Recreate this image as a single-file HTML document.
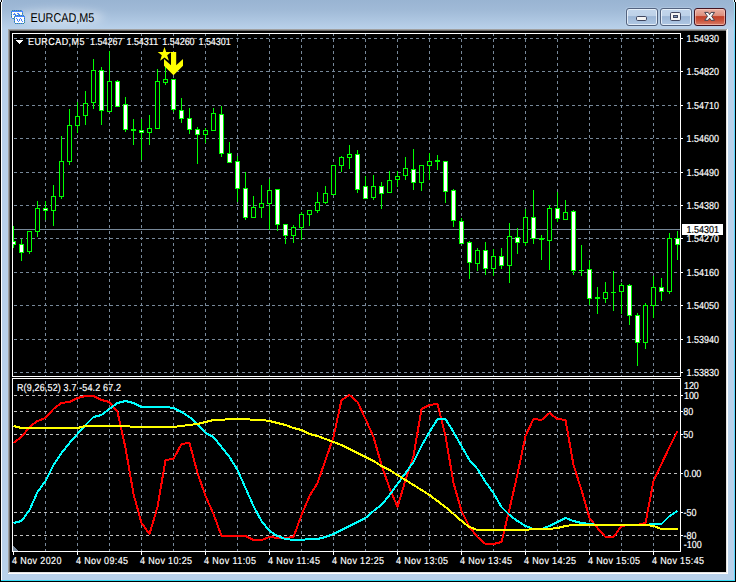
<!DOCTYPE html>
<html><head><meta charset="utf-8"><title>EURCAD,M5</title>
<style>
html,body{margin:0;padding:0;background:#fff;}
body{width:738px;height:582px;overflow:hidden;position:relative;font-family:"Liberation Sans",sans-serif;}
#win{position:absolute;left:0;top:0;width:736px;height:582px;background:#b9d1ea;}
#cap{position:absolute;left:2px;top:0;width:732px;height:29px;background:linear-gradient(to bottom,#99b4d2 0%,#a0bad7 35%,#b9d1ea 100%);}
.edge{position:absolute;}
.btn{position:absolute;top:8px;width:30px;height:16px;border:1px solid #53637f;border-radius:3px;
 background:linear-gradient(to bottom,#c3d6ec 0%,#bdd1e8 46%,#9cb6d6 47%,#b0c8e4 100%);box-shadow:inset 0 0 0 1px rgba(240,246,253,.8),0 0 0 1px rgba(200,218,238,.35);}
.btn.close{border-color:#431422;background:linear-gradient(to bottom,#eab2a5 0%,#dc8a78 46%,#c23f27 47%,#c9513a 70%,#d87d68 100%);box-shadow:inset 0 0 0 1px rgba(255,215,205,.55);}
svg{position:absolute;left:0;top:0;}
text{font-family:"Liberation Sans",sans-serif;font-size:9px;fill:#fff;text-rendering:geometricPrecision;}
</style></head><body>
<div id="win">
<div id="cap"></div>
<div class="edge" style="left:0;top:2px;width:1px;height:580px;background:#000"></div>
<div class="edge" style="left:1px;top:2px;width:1px;height:578px;background:#fff"></div>
<div class="edge" style="left:734px;top:2px;width:1px;height:579px;background:linear-gradient(to bottom,#a6e8fb 0,#8ee2fc 14px,#5cd8ff 40px,#5cd8ff 100%)"></div>
<div class="edge" style="left:735px;top:2px;width:1px;height:580px;background:#000"></div>
<div class="edge" style="left:1px;top:580px;width:734px;height:1px;background:#35dcf6"></div>
<div class="edge" style="left:0;top:581px;width:736px;height:1px;background:#000"></div>
<div class="edge" style="left:1px;top:0;width:1px;height:2px;background:#000"></div>
<div class="edge" style="left:0;top:0;width:1px;height:2px;background:#dce8f4"></div>
<div class="edge" style="left:2px;top:0;width:1px;height:2px;background:#e8f0f8"></div>
<div class="edge" style="left:734px;top:0;width:1px;height:2px;background:#000"></div>
<div class="edge" style="left:735px;top:0;width:1px;height:2px;background:#fff"></div>
<div class="edge" style="left:733px;top:0;width:1px;height:2px;background:#d4f2fb"></div>
<!-- client sunken edge -->
<div class="edge" style="left:8px;top:29px;width:720px;height:545px;background:#fff"></div>
<div class="edge" style="left:8px;top:29px;width:719px;height:544px;background:#a0a0a0"></div>
<div class="edge" style="left:9px;top:30px;width:718px;height:543px;background:#e3e3e3"></div>
<div class="edge" style="left:9px;top:30px;width:717px;height:542px;background:#696969"></div>
<div class="edge" style="left:10px;top:31px;width:716px;height:541px;background:#000"></div>
<!-- caption buttons -->
<div class="btn" style="left:626px"></div>
<div class="btn" style="left:660px"></div>
<div class="btn close" style="left:694px"></div>
</div>

<svg width="738" height="582" viewBox="0 0 738 582">
<defs><filter id="gl" x="-30%" y="-100%" width="160%" height="300%"><feGaussianBlur stdDeviation="4"/></filter></defs>
<ellipse cx="60" cy="17" rx="44" ry="7" fill="#fff" opacity="0.42" filter="url(#gl)"/>
<g shape-rendering="crispEdges">
<rect x="12" y="10" width="10" height="1" fill="#4a86ff"/>
<rect x="11" y="11" width="12" height="1" fill="#4a86ff"/>
<rect x="11" y="12" width="1" height="6" fill="#4a86ff"/>
<rect x="22" y="12" width="1" height="6" fill="#4a86ff"/>
<rect x="12" y="18" width="10" height="1" fill="#4a86ff"/>
<rect x="12" y="12" width="10" height="6" fill="#fffdf0"/>
<rect x="12" y="10" width="1" height="1" fill="#3f8f86"/>
<rect x="13" y="18" width="1" height="1" fill="#3f8f86"/>
<rect x="14" y="10" width="1" height="1" fill="#3f8f86"/>
<rect x="15" y="18" width="1" height="1" fill="#3f8f86"/>
<rect x="16" y="10" width="1" height="1" fill="#3f8f86"/>
<rect x="17" y="18" width="1" height="1" fill="#3f8f86"/>
<rect x="18" y="10" width="1" height="1" fill="#3f8f86"/>
<rect x="19" y="18" width="1" height="1" fill="#3f8f86"/>
<rect x="20" y="10" width="1" height="1" fill="#3f8f86"/>
<rect x="21" y="18" width="1" height="1" fill="#3f8f86"/>
<rect x="11" y="12" width="1" height="1" fill="#3f8f86"/>
<rect x="22" y="13" width="1" height="1" fill="#3f8f86"/>
<rect x="11" y="14" width="1" height="1" fill="#3f8f86"/>
<rect x="22" y="15" width="1" height="1" fill="#3f8f86"/>
<rect x="11" y="16" width="1" height="1" fill="#3f8f86"/>
<rect x="22" y="17" width="1" height="1" fill="#3f8f86"/>
<rect x="14" y="13" width="1" height="1" fill="#4a86ff"/>
<rect x="13" y="14" width="1" height="1" fill="#4a86ff"/>
<rect x="14" y="14" width="1" height="1" fill="#4a86ff"/>
<rect x="15" y="14" width="1" height="1" fill="#4a86ff"/>
<rect x="17" y="13" width="1" height="1" fill="#4a86ff"/>
<rect x="18" y="13" width="1" height="1" fill="#4a86ff"/>
<rect x="18" y="14" width="1" height="1" fill="#4a86ff"/>
<rect x="19" y="14" width="1" height="1" fill="#4a86ff"/>
<rect x="19" y="15" width="1" height="1" fill="#4a86ff"/>
<rect x="15" y="15" width="9" height="1" fill="#4a86ff"/>
<rect x="14" y="16" width="11" height="1" fill="#4a86ff"/>
<rect x="14" y="17" width="1" height="6" fill="#4a86ff"/>
<rect x="24" y="17" width="1" height="6" fill="#4a86ff"/>
<rect x="15" y="23" width="9" height="1" fill="#4a86ff"/>
<rect x="15" y="17" width="9" height="6" fill="#ffffff"/>
<rect x="15" y="15" width="1" height="1" fill="#3f8f86"/>
<rect x="15" y="23" width="1" height="1" fill="#3f8f86"/>
<rect x="17" y="15" width="1" height="1" fill="#3f8f86"/>
<rect x="17" y="23" width="1" height="1" fill="#3f8f86"/>
<rect x="19" y="15" width="1" height="1" fill="#3f8f86"/>
<rect x="19" y="23" width="1" height="1" fill="#3f8f86"/>
<rect x="21" y="15" width="1" height="1" fill="#3f8f86"/>
<rect x="21" y="23" width="1" height="1" fill="#3f8f86"/>
<rect x="23" y="15" width="1" height="1" fill="#3f8f86"/>
<rect x="23" y="23" width="1" height="1" fill="#3f8f86"/>
<rect x="14" y="17" width="1" height="1" fill="#3f8f86"/>
<rect x="24" y="18" width="1" height="1" fill="#3f8f86"/>
<rect x="14" y="19" width="1" height="1" fill="#3f8f86"/>
<rect x="24" y="20" width="1" height="1" fill="#3f8f86"/>
<rect x="14" y="21" width="1" height="1" fill="#3f8f86"/>
<rect x="24" y="22" width="1" height="1" fill="#3f8f86"/>
<rect x="16" y="18" width="1" height="1" fill="#4a86ff"/>
<rect x="17" y="19" width="1" height="1" fill="#4a86ff"/>
<rect x="17" y="20" width="1" height="1" fill="#4a86ff"/>
<rect x="18" y="21" width="1" height="1" fill="#4a86ff"/>
<rect x="19" y="20" width="1" height="1" fill="#4a86ff"/>
<rect x="19" y="19" width="1" height="1" fill="#4a86ff"/>
<rect x="20" y="18" width="1" height="1" fill="#4a86ff"/>
<rect x="21" y="19" width="1" height="1" fill="#4a86ff"/>
<rect x="21" y="20" width="1" height="1" fill="#4a86ff"/>
<rect x="22" y="21" width="1" height="1" fill="#4a86ff"/>
</g>
<text x="30.6" y="21.6" style="font-size:12.8px;fill:#000" textLength="63.6" lengthAdjust="spacingAndGlyphs">EURCAD,M5</text>
<rect x="636.5" y="16.5" width="10" height="4" rx="1.2" fill="#f4f4f4" stroke="#3f4660"/>
<rect x="670.5" y="12.5" width="10" height="8" rx="1.2" fill="#f4f4f4" stroke="#3f4660"/>
<rect x="673.5" y="15.5" width="4" height="2" fill="#7f97b8" stroke="#3f4660"/>
<polygon points="704.7,12.4 708.2,12.4 709.6,14.6 711,12.4 714.5,12.4 711.7,16.35 714.5,20.3 711,20.3 709.6,18.1 708.2,20.3 704.7,20.3 707.5,16.35" fill="#f7f7f7" stroke="#45434f" stroke-width="1" stroke-linejoin="round"/>
<g shape-rendering="crispEdges" fill="none">
<path d="M13 38.5H680" stroke="#778899" stroke-dasharray="3 3" stroke-dashoffset="5"/>
<path d="M13 71.5H680" stroke="#778899" stroke-dasharray="3 3" stroke-dashoffset="5"/>
<path d="M13 105.5H680" stroke="#778899" stroke-dasharray="3 3" stroke-dashoffset="5"/>
<path d="M13 138.5H680" stroke="#778899" stroke-dasharray="3 3" stroke-dashoffset="5"/>
<path d="M13 172.5H680" stroke="#778899" stroke-dasharray="3 3" stroke-dashoffset="5"/>
<path d="M13 205.5H680" stroke="#778899" stroke-dasharray="3 3" stroke-dashoffset="5"/>
<path d="M13 238.5H680" stroke="#778899" stroke-dasharray="3 3" stroke-dashoffset="5"/>
<path d="M13 272.5H680" stroke="#778899" stroke-dasharray="3 3" stroke-dashoffset="5"/>
<path d="M13 305.5H680" stroke="#778899" stroke-dasharray="3 3" stroke-dashoffset="5"/>
<path d="M13 339.5H680" stroke="#778899" stroke-dasharray="3 3" stroke-dashoffset="5"/>
<path d="M13 372.5H680" stroke="#778899" stroke-dasharray="3 3" stroke-dashoffset="5"/>
<path d="M45.5 34V376" stroke="#778899" stroke-dasharray="3 3" stroke-dashoffset="1"/>
<path d="M45.5 379V551" stroke="#778899" stroke-dasharray="3 3" stroke-dashoffset="4"/>
<path d="M77.5 34V376" stroke="#778899" stroke-dasharray="3 3" stroke-dashoffset="1"/>
<path d="M77.5 379V551" stroke="#778899" stroke-dasharray="3 3" stroke-dashoffset="4"/>
<path d="M109.5 34V376" stroke="#778899" stroke-dasharray="3 3" stroke-dashoffset="1"/>
<path d="M109.5 379V551" stroke="#778899" stroke-dasharray="3 3" stroke-dashoffset="4"/>
<path d="M141.5 34V376" stroke="#778899" stroke-dasharray="3 3" stroke-dashoffset="1"/>
<path d="M141.5 379V551" stroke="#778899" stroke-dasharray="3 3" stroke-dashoffset="4"/>
<path d="M173.5 34V376" stroke="#778899" stroke-dasharray="3 3" stroke-dashoffset="1"/>
<path d="M173.5 379V551" stroke="#778899" stroke-dasharray="3 3" stroke-dashoffset="4"/>
<path d="M205.5 34V376" stroke="#778899" stroke-dasharray="3 3" stroke-dashoffset="1"/>
<path d="M205.5 379V551" stroke="#778899" stroke-dasharray="3 3" stroke-dashoffset="4"/>
<path d="M237.5 34V376" stroke="#778899" stroke-dasharray="3 3" stroke-dashoffset="1"/>
<path d="M237.5 379V551" stroke="#778899" stroke-dasharray="3 3" stroke-dashoffset="4"/>
<path d="M269.5 34V376" stroke="#778899" stroke-dasharray="3 3" stroke-dashoffset="1"/>
<path d="M269.5 379V551" stroke="#778899" stroke-dasharray="3 3" stroke-dashoffset="4"/>
<path d="M301.5 34V376" stroke="#778899" stroke-dasharray="3 3" stroke-dashoffset="1"/>
<path d="M301.5 379V551" stroke="#778899" stroke-dasharray="3 3" stroke-dashoffset="4"/>
<path d="M333.5 34V376" stroke="#778899" stroke-dasharray="3 3" stroke-dashoffset="1"/>
<path d="M333.5 379V551" stroke="#778899" stroke-dasharray="3 3" stroke-dashoffset="4"/>
<path d="M365.5 34V376" stroke="#778899" stroke-dasharray="3 3" stroke-dashoffset="1"/>
<path d="M365.5 379V551" stroke="#778899" stroke-dasharray="3 3" stroke-dashoffset="4"/>
<path d="M397.5 34V376" stroke="#778899" stroke-dasharray="3 3" stroke-dashoffset="1"/>
<path d="M397.5 379V551" stroke="#778899" stroke-dasharray="3 3" stroke-dashoffset="4"/>
<path d="M429.5 34V376" stroke="#778899" stroke-dasharray="3 3" stroke-dashoffset="1"/>
<path d="M429.5 379V551" stroke="#778899" stroke-dasharray="3 3" stroke-dashoffset="4"/>
<path d="M461.5 34V376" stroke="#778899" stroke-dasharray="3 3" stroke-dashoffset="1"/>
<path d="M461.5 379V551" stroke="#778899" stroke-dasharray="3 3" stroke-dashoffset="4"/>
<path d="M493.5 34V376" stroke="#778899" stroke-dasharray="3 3" stroke-dashoffset="1"/>
<path d="M493.5 379V551" stroke="#778899" stroke-dasharray="3 3" stroke-dashoffset="4"/>
<path d="M525.5 34V376" stroke="#778899" stroke-dasharray="3 3" stroke-dashoffset="1"/>
<path d="M525.5 379V551" stroke="#778899" stroke-dasharray="3 3" stroke-dashoffset="4"/>
<path d="M557.5 34V376" stroke="#778899" stroke-dasharray="3 3" stroke-dashoffset="1"/>
<path d="M557.5 379V551" stroke="#778899" stroke-dasharray="3 3" stroke-dashoffset="4"/>
<path d="M589.5 34V376" stroke="#778899" stroke-dasharray="3 3" stroke-dashoffset="1"/>
<path d="M589.5 379V551" stroke="#778899" stroke-dasharray="3 3" stroke-dashoffset="4"/>
<path d="M621.5 34V376" stroke="#778899" stroke-dasharray="3 3" stroke-dashoffset="1"/>
<path d="M621.5 379V551" stroke="#778899" stroke-dasharray="3 3" stroke-dashoffset="4"/>
<path d="M653.5 34V376" stroke="#778899" stroke-dasharray="3 3" stroke-dashoffset="1"/>
<path d="M653.5 379V551" stroke="#778899" stroke-dasharray="3 3" stroke-dashoffset="4"/>
<path d="M13 395.5H680" stroke="#c0c0c0" stroke-dasharray="3 3" stroke-dashoffset="5"/>
<path d="M13 411.5H680" stroke="#c0c0c0" stroke-dasharray="3 3" stroke-dashoffset="5"/>
<path d="M13 434.5H680" stroke="#c0c0c0" stroke-dasharray="3 3" stroke-dashoffset="5"/>
<path d="M13 473.5H680" stroke="#c0c0c0" stroke-dasharray="3 3" stroke-dashoffset="5"/>
<path d="M13 512.5H680" stroke="#c0c0c0" stroke-dasharray="3 3" stroke-dashoffset="5"/>
<path d="M13 535.5H680" stroke="#c0c0c0" stroke-dasharray="3 3" stroke-dashoffset="5"/>
<path d="M13 229.5H680" stroke="#778899"/>
</g>
<g shape-rendering="crispEdges">
<rect x="13" y="226" width="1" height="22" fill="#00ff00"/>
<rect x="13" y="241" width="3" height="4" fill="#00ff00"/>
<rect x="13" y="242" width="2" height="2" fill="#fff"/>
<rect x="21" y="239" width="1" height="22" fill="#00ff00"/>
<rect x="19" y="244" width="5" height="9" fill="#00ff00"/>
<rect x="20" y="245" width="3" height="7" fill="#fff"/>
<rect x="29" y="231" width="1" height="23" fill="#00ff00"/>
<rect x="27" y="231" width="5" height="21" fill="#00ff00"/>
<rect x="28" y="232" width="3" height="19" fill="#000"/>
<rect x="37" y="201" width="1" height="36" fill="#00ff00"/>
<rect x="35" y="208" width="5" height="24" fill="#00ff00"/>
<rect x="36" y="209" width="3" height="22" fill="#000"/>
<rect x="45" y="201" width="1" height="19" fill="#00ff00"/>
<rect x="43" y="208" width="5" height="3" fill="#00ff00"/>
<rect x="44" y="209" width="3" height="1" fill="#fff"/>
<rect x="53" y="185" width="1" height="41" fill="#00ff00"/>
<rect x="51" y="196" width="5" height="15" fill="#00ff00"/>
<rect x="52" y="197" width="3" height="13" fill="#000"/>
<rect x="61" y="136" width="1" height="63" fill="#00ff00"/>
<rect x="59" y="161" width="5" height="36" fill="#00ff00"/>
<rect x="60" y="162" width="3" height="34" fill="#000"/>
<rect x="69" y="109" width="1" height="56" fill="#00ff00"/>
<rect x="67" y="125" width="5" height="37" fill="#00ff00"/>
<rect x="68" y="126" width="3" height="35" fill="#000"/>
<rect x="77" y="102" width="1" height="31" fill="#00ff00"/>
<rect x="75" y="116" width="5" height="10" fill="#00ff00"/>
<rect x="76" y="117" width="3" height="8" fill="#000"/>
<rect x="85" y="91" width="1" height="34" fill="#00ff00"/>
<rect x="83" y="103" width="5" height="13" fill="#00ff00"/>
<rect x="84" y="104" width="3" height="11" fill="#000"/>
<rect x="93" y="59" width="1" height="50" fill="#00ff00"/>
<rect x="91" y="70" width="5" height="33" fill="#00ff00"/>
<rect x="92" y="71" width="3" height="31" fill="#000"/>
<rect x="101" y="67" width="1" height="58" fill="#00ff00"/>
<rect x="99" y="70" width="5" height="41" fill="#00ff00"/>
<rect x="100" y="71" width="3" height="39" fill="#fff"/>
<rect x="109" y="51" width="1" height="61" fill="#00ff00"/>
<rect x="107" y="81" width="5" height="31" fill="#00ff00"/>
<rect x="108" y="82" width="3" height="29" fill="#000"/>
<rect x="117" y="80" width="1" height="27" fill="#00ff00"/>
<rect x="115" y="81" width="5" height="26" fill="#00ff00"/>
<rect x="116" y="82" width="3" height="24" fill="#fff"/>
<rect x="125" y="97" width="1" height="35" fill="#00ff00"/>
<rect x="123" y="104" width="5" height="26" fill="#00ff00"/>
<rect x="124" y="105" width="3" height="24" fill="#fff"/>
<rect x="133" y="119" width="1" height="26" fill="#00ff00"/>
<rect x="131" y="129" width="5" height="2" fill="#00ff00"/>
<rect x="141" y="119" width="1" height="41" fill="#00ff00"/>
<rect x="139" y="130" width="5" height="3" fill="#00ff00"/>
<rect x="140" y="131" width="3" height="1" fill="#fff"/>
<rect x="149" y="115" width="1" height="30" fill="#00ff00"/>
<rect x="147" y="128" width="5" height="5" fill="#00ff00"/>
<rect x="148" y="129" width="3" height="3" fill="#000"/>
<rect x="157" y="69" width="1" height="60" fill="#00ff00"/>
<rect x="155" y="81" width="5" height="48" fill="#00ff00"/>
<rect x="156" y="82" width="3" height="46" fill="#000"/>
<rect x="165" y="67" width="1" height="18" fill="#00ff00"/>
<rect x="163" y="79" width="5" height="4" fill="#00ff00"/>
<rect x="164" y="80" width="3" height="2" fill="#000"/>
<rect x="173" y="79" width="1" height="33" fill="#00ff00"/>
<rect x="171" y="79" width="5" height="31" fill="#00ff00"/>
<rect x="172" y="80" width="3" height="29" fill="#fff"/>
<rect x="181" y="98" width="1" height="25" fill="#00ff00"/>
<rect x="179" y="110" width="5" height="9" fill="#00ff00"/>
<rect x="180" y="111" width="3" height="7" fill="#fff"/>
<rect x="189" y="108" width="1" height="26" fill="#00ff00"/>
<rect x="187" y="118" width="5" height="12" fill="#00ff00"/>
<rect x="188" y="119" width="3" height="10" fill="#fff"/>
<rect x="197" y="127" width="1" height="37" fill="#00ff00"/>
<rect x="195" y="129" width="5" height="6" fill="#00ff00"/>
<rect x="196" y="130" width="3" height="4" fill="#fff"/>
<rect x="205" y="128" width="1" height="15" fill="#00ff00"/>
<rect x="203" y="130" width="5" height="5" fill="#00ff00"/>
<rect x="204" y="131" width="3" height="3" fill="#000"/>
<rect x="213" y="108" width="1" height="23" fill="#00ff00"/>
<rect x="211" y="113" width="5" height="18" fill="#00ff00"/>
<rect x="212" y="114" width="3" height="16" fill="#000"/>
<rect x="221" y="106" width="1" height="51" fill="#00ff00"/>
<rect x="219" y="114" width="5" height="40" fill="#00ff00"/>
<rect x="220" y="115" width="3" height="38" fill="#fff"/>
<rect x="229" y="142" width="1" height="21" fill="#00ff00"/>
<rect x="227" y="153" width="5" height="10" fill="#00ff00"/>
<rect x="228" y="154" width="3" height="8" fill="#fff"/>
<rect x="237" y="156" width="1" height="46" fill="#00ff00"/>
<rect x="235" y="161" width="5" height="28" fill="#00ff00"/>
<rect x="236" y="162" width="3" height="26" fill="#fff"/>
<rect x="245" y="172" width="1" height="48" fill="#00ff00"/>
<rect x="243" y="188" width="5" height="30" fill="#00ff00"/>
<rect x="244" y="189" width="3" height="28" fill="#fff"/>
<rect x="253" y="196" width="1" height="22" fill="#00ff00"/>
<rect x="251" y="207" width="5" height="11" fill="#00ff00"/>
<rect x="252" y="208" width="3" height="9" fill="#000"/>
<rect x="261" y="185" width="1" height="33" fill="#00ff00"/>
<rect x="259" y="203" width="5" height="5" fill="#00ff00"/>
<rect x="260" y="204" width="3" height="3" fill="#000"/>
<rect x="269" y="179" width="1" height="51" fill="#00ff00"/>
<rect x="267" y="190" width="5" height="14" fill="#00ff00"/>
<rect x="268" y="191" width="3" height="12" fill="#000"/>
<rect x="277" y="189" width="1" height="42" fill="#00ff00"/>
<rect x="275" y="189" width="5" height="36" fill="#00ff00"/>
<rect x="276" y="190" width="3" height="34" fill="#fff"/>
<rect x="285" y="224" width="1" height="20" fill="#00ff00"/>
<rect x="283" y="224" width="5" height="12" fill="#00ff00"/>
<rect x="284" y="225" width="3" height="10" fill="#fff"/>
<rect x="293" y="225" width="1" height="18" fill="#00ff00"/>
<rect x="291" y="227" width="5" height="9" fill="#00ff00"/>
<rect x="292" y="228" width="3" height="7" fill="#000"/>
<rect x="301" y="212" width="1" height="28" fill="#00ff00"/>
<rect x="299" y="214" width="5" height="14" fill="#00ff00"/>
<rect x="300" y="215" width="3" height="12" fill="#000"/>
<rect x="309" y="210" width="1" height="16" fill="#00ff00"/>
<rect x="307" y="210" width="5" height="5" fill="#00ff00"/>
<rect x="308" y="211" width="3" height="3" fill="#000"/>
<rect x="317" y="192" width="1" height="21" fill="#00ff00"/>
<rect x="315" y="202" width="5" height="9" fill="#00ff00"/>
<rect x="316" y="203" width="3" height="7" fill="#000"/>
<rect x="325" y="186" width="1" height="18" fill="#00ff00"/>
<rect x="323" y="193" width="5" height="10" fill="#00ff00"/>
<rect x="324" y="194" width="3" height="8" fill="#000"/>
<rect x="333" y="165" width="1" height="30" fill="#00ff00"/>
<rect x="331" y="165" width="5" height="30" fill="#00ff00"/>
<rect x="332" y="166" width="3" height="28" fill="#000"/>
<rect x="341" y="156" width="1" height="16" fill="#00ff00"/>
<rect x="339" y="157" width="5" height="9" fill="#00ff00"/>
<rect x="340" y="158" width="3" height="7" fill="#000"/>
<rect x="349" y="145" width="1" height="24" fill="#00ff00"/>
<rect x="347" y="154" width="5" height="4" fill="#00ff00"/>
<rect x="348" y="155" width="3" height="2" fill="#000"/>
<rect x="357" y="150" width="1" height="43" fill="#00ff00"/>
<rect x="355" y="154" width="5" height="36" fill="#00ff00"/>
<rect x="356" y="155" width="3" height="34" fill="#fff"/>
<rect x="365" y="176" width="1" height="23" fill="#00ff00"/>
<rect x="363" y="186" width="5" height="13" fill="#00ff00"/>
<rect x="364" y="187" width="3" height="11" fill="#fff"/>
<rect x="373" y="175" width="1" height="25" fill="#00ff00"/>
<rect x="371" y="186" width="5" height="12" fill="#00ff00"/>
<rect x="372" y="187" width="3" height="10" fill="#000"/>
<rect x="381" y="182" width="1" height="27" fill="#00ff00"/>
<rect x="379" y="186" width="5" height="8" fill="#00ff00"/>
<rect x="380" y="187" width="3" height="6" fill="#fff"/>
<rect x="389" y="171" width="1" height="22" fill="#00ff00"/>
<rect x="387" y="180" width="5" height="13" fill="#00ff00"/>
<rect x="388" y="181" width="3" height="11" fill="#000"/>
<rect x="397" y="171" width="1" height="16" fill="#00ff00"/>
<rect x="395" y="176" width="5" height="4" fill="#00ff00"/>
<rect x="396" y="177" width="3" height="2" fill="#000"/>
<rect x="405" y="157" width="1" height="23" fill="#00ff00"/>
<rect x="403" y="168" width="5" height="8" fill="#00ff00"/>
<rect x="404" y="169" width="3" height="6" fill="#000"/>
<rect x="413" y="149" width="1" height="41" fill="#00ff00"/>
<rect x="411" y="169" width="5" height="14" fill="#00ff00"/>
<rect x="412" y="170" width="3" height="12" fill="#fff"/>
<rect x="421" y="165" width="1" height="26" fill="#00ff00"/>
<rect x="419" y="165" width="5" height="18" fill="#00ff00"/>
<rect x="420" y="166" width="3" height="16" fill="#000"/>
<rect x="429" y="153" width="1" height="27" fill="#00ff00"/>
<rect x="427" y="161" width="5" height="5" fill="#00ff00"/>
<rect x="428" y="162" width="3" height="3" fill="#000"/>
<rect x="437" y="155" width="1" height="15" fill="#00ff00"/>
<rect x="435" y="160" width="5" height="2" fill="#00ff00"/>
<rect x="445" y="161" width="1" height="42" fill="#00ff00"/>
<rect x="443" y="161" width="5" height="31" fill="#00ff00"/>
<rect x="444" y="162" width="3" height="29" fill="#fff"/>
<rect x="453" y="189" width="1" height="38" fill="#00ff00"/>
<rect x="451" y="190" width="5" height="31" fill="#00ff00"/>
<rect x="452" y="191" width="3" height="29" fill="#fff"/>
<rect x="461" y="218" width="1" height="26" fill="#00ff00"/>
<rect x="459" y="221" width="5" height="23" fill="#00ff00"/>
<rect x="460" y="222" width="3" height="21" fill="#fff"/>
<rect x="469" y="241" width="1" height="38" fill="#00ff00"/>
<rect x="467" y="242" width="5" height="21" fill="#00ff00"/>
<rect x="468" y="243" width="3" height="19" fill="#fff"/>
<rect x="477" y="248" width="1" height="23" fill="#00ff00"/>
<rect x="475" y="250" width="5" height="14" fill="#00ff00"/>
<rect x="476" y="251" width="3" height="12" fill="#000"/>
<rect x="485" y="242" width="1" height="33" fill="#00ff00"/>
<rect x="483" y="250" width="5" height="19" fill="#00ff00"/>
<rect x="484" y="251" width="3" height="17" fill="#fff"/>
<rect x="493" y="249" width="1" height="27" fill="#00ff00"/>
<rect x="491" y="256" width="5" height="13" fill="#00ff00"/>
<rect x="492" y="257" width="3" height="11" fill="#000"/>
<rect x="501" y="248" width="1" height="21" fill="#00ff00"/>
<rect x="499" y="256" width="5" height="10" fill="#00ff00"/>
<rect x="500" y="257" width="3" height="8" fill="#fff"/>
<rect x="509" y="223" width="1" height="60" fill="#00ff00"/>
<rect x="507" y="236" width="5" height="30" fill="#00ff00"/>
<rect x="508" y="237" width="3" height="28" fill="#000"/>
<rect x="517" y="228" width="1" height="26" fill="#00ff00"/>
<rect x="515" y="237" width="5" height="6" fill="#00ff00"/>
<rect x="516" y="238" width="3" height="4" fill="#fff"/>
<rect x="525" y="209" width="1" height="37" fill="#00ff00"/>
<rect x="523" y="217" width="5" height="26" fill="#00ff00"/>
<rect x="524" y="218" width="3" height="24" fill="#000"/>
<rect x="533" y="190" width="1" height="54" fill="#00ff00"/>
<rect x="531" y="217" width="5" height="22" fill="#00ff00"/>
<rect x="532" y="218" width="3" height="20" fill="#fff"/>
<rect x="541" y="235" width="1" height="25" fill="#00ff00"/>
<rect x="539" y="238" width="5" height="2" fill="#00ff00"/>
<rect x="549" y="205" width="1" height="65" fill="#00ff00"/>
<rect x="547" y="208" width="5" height="33" fill="#00ff00"/>
<rect x="548" y="209" width="3" height="31" fill="#000"/>
<rect x="557" y="192" width="1" height="30" fill="#00ff00"/>
<rect x="555" y="208" width="5" height="11" fill="#00ff00"/>
<rect x="556" y="209" width="3" height="9" fill="#fff"/>
<rect x="565" y="200" width="1" height="20" fill="#00ff00"/>
<rect x="563" y="212" width="5" height="8" fill="#00ff00"/>
<rect x="564" y="213" width="3" height="6" fill="#000"/>
<rect x="573" y="210" width="1" height="65" fill="#00ff00"/>
<rect x="571" y="211" width="5" height="60" fill="#00ff00"/>
<rect x="572" y="212" width="3" height="58" fill="#fff"/>
<rect x="581" y="245" width="1" height="31" fill="#00ff00"/>
<rect x="579" y="270" width="5" height="1" fill="#00ff00"/>
<rect x="589" y="260" width="1" height="45" fill="#00ff00"/>
<rect x="587" y="269" width="5" height="30" fill="#00ff00"/>
<rect x="588" y="270" width="3" height="28" fill="#fff"/>
<rect x="597" y="287" width="1" height="27" fill="#00ff00"/>
<rect x="595" y="297" width="5" height="2" fill="#00ff00"/>
<rect x="605" y="282" width="1" height="21" fill="#00ff00"/>
<rect x="603" y="292" width="5" height="7" fill="#00ff00"/>
<rect x="604" y="293" width="3" height="5" fill="#000"/>
<rect x="613" y="271" width="1" height="40" fill="#00ff00"/>
<rect x="611" y="292" width="5" height="1" fill="#00ff00"/>
<rect x="621" y="283" width="1" height="31" fill="#00ff00"/>
<rect x="619" y="285" width="5" height="7" fill="#00ff00"/>
<rect x="620" y="286" width="3" height="5" fill="#000"/>
<rect x="629" y="284" width="1" height="41" fill="#00ff00"/>
<rect x="627" y="285" width="5" height="31" fill="#00ff00"/>
<rect x="628" y="286" width="3" height="29" fill="#fff"/>
<rect x="637" y="313" width="1" height="53" fill="#00ff00"/>
<rect x="635" y="315" width="5" height="28" fill="#00ff00"/>
<rect x="636" y="316" width="3" height="26" fill="#fff"/>
<rect x="645" y="303" width="1" height="46" fill="#00ff00"/>
<rect x="643" y="305" width="5" height="38" fill="#00ff00"/>
<rect x="644" y="306" width="3" height="36" fill="#000"/>
<rect x="653" y="276" width="1" height="42" fill="#00ff00"/>
<rect x="651" y="287" width="5" height="19" fill="#00ff00"/>
<rect x="652" y="288" width="3" height="17" fill="#000"/>
<rect x="661" y="278" width="1" height="23" fill="#00ff00"/>
<rect x="659" y="287" width="5" height="5" fill="#00ff00"/>
<rect x="660" y="288" width="3" height="3" fill="#fff"/>
<rect x="669" y="233" width="1" height="61" fill="#00ff00"/>
<rect x="667" y="238" width="5" height="54" fill="#00ff00"/>
<rect x="668" y="239" width="3" height="52" fill="#000"/>
<rect x="677" y="231" width="1" height="29" fill="#00ff00"/>
<rect x="675" y="238" width="5" height="7" fill="#00ff00"/>
<rect x="676" y="239" width="3" height="5" fill="#fff"/>
</g>
<polygon points="164.5,47 166.2,52 171.3,52 167.2,55.2 168.9,60.8 164.5,57.4 160.1,60.8 161.8,55.2 157.7,52 162.8,52" fill="#ffff00"/>
<polygon points="171,52 176.2,52 176.2,65.3 183,59 183,65.7 173.5,75.3 164,65.7 164,59 171,65.3" fill="#ffff00"/>
<polyline points="13.5,443 21.5,437 29.5,427 37.5,421 45.5,418 53.5,409 61.5,403 69.5,402 77.5,398 85.5,396 93.5,396 101.5,400 109.5,402 117.5,412 125.5,448 133.5,494 141.5,523 149.5,534 157.5,507 165.5,460 173.5,459 181.5,444 189.5,443 197.5,473 205.5,496 213.5,514 221.5,536 229.5,536 237.5,536 245.5,536 253.5,540 261.5,540 269.5,537 277.5,538 285.5,538 293.5,537 301.5,515 309.5,496 317.5,483 325.5,460 333.5,437 341.5,400 349.5,395 357.5,402 365.5,419 373.5,437 381.5,465 389.5,488 397.5,507 405.5,480 413.5,456 421.5,409 429.5,405 437.5,404 445.5,436 453.5,483 461.5,511 469.5,527 477.5,537 485.5,544 493.5,544 501.5,542 509.5,509 517.5,474 525.5,436 533.5,419 541.5,420 549.5,413 557.5,419 565.5,420 573.5,465 581.5,490 589.5,518 597.5,528 605.5,537 613.5,537 621.5,526 629.5,525 637.5,525 645.5,523 653.5,481 661.5,464 669.5,447 677.5,431" fill="none" stroke="#ff0000" stroke-width="2" stroke-linejoin="round" shape-rendering="crispEdges"/>
<polyline points="13.5,523 21.5,521 29.5,510 37.5,492 45.5,481 53.5,465 61.5,453 69.5,443 77.5,434 85.5,425 93.5,417 101.5,415 109.5,409 117.5,403 125.5,401 133.5,403 141.5,407 149.5,407 157.5,407 165.5,407 173.5,408 181.5,412 189.5,417 197.5,424 205.5,433 213.5,437 221.5,447 229.5,457 237.5,470 245.5,488 253.5,506 261.5,521 269.5,531 277.5,536 285.5,539 293.5,540 301.5,540 309.5,539 317.5,539 325.5,537 333.5,534 341.5,530 349.5,526 357.5,522 365.5,518 373.5,511 381.5,505 389.5,495 397.5,484 405.5,473 413.5,462 421.5,446 429.5,432 437.5,419 445.5,419 453.5,432 461.5,446 469.5,460 477.5,469 485.5,482 493.5,493 501.5,507 509.5,515 517.5,521 525.5,526 533.5,529 541.5,529 549.5,526 557.5,522 565.5,518 573.5,521 581.5,523 589.5,524 597.5,525 605.5,525 613.5,525 621.5,525 629.5,525 637.5,525 645.5,525 653.5,524 661.5,524 669.5,516 677.5,511" fill="none" stroke="#00ffff" stroke-width="2" stroke-linejoin="round" shape-rendering="crispEdges"/>
<polyline points="13.5,426 21.5,428 29.5,428 37.5,428 45.5,428 53.5,428 61.5,428 69.5,428 77.5,428 85.5,426 93.5,426 101.5,426 109.5,426 117.5,426 125.5,426 133.5,427 141.5,427 149.5,427 157.5,427 165.5,427 173.5,427 181.5,426 189.5,425 197.5,424 205.5,422 213.5,420 221.5,420 229.5,419 237.5,419 245.5,419 253.5,420 261.5,420 269.5,421 277.5,423 285.5,425 293.5,428 301.5,430 309.5,434 317.5,436 325.5,439 333.5,442 341.5,445 349.5,449 357.5,453 365.5,457 373.5,461 381.5,466 389.5,470 397.5,475 405.5,480 413.5,485 421.5,490 429.5,495 437.5,501 445.5,507 453.5,514 461.5,521 469.5,527 477.5,530 485.5,530 493.5,530 501.5,530 509.5,530 517.5,530 525.5,530 533.5,529 541.5,529 549.5,529 557.5,528 565.5,526 573.5,525 581.5,525 589.5,525 597.5,525 605.5,525 613.5,525 621.5,525 629.5,525 637.5,525 645.5,525 653.5,526 661.5,529 669.5,529 677.5,529" fill="none" stroke="#ffff00" stroke-width="2" stroke-linejoin="round" shape-rendering="crispEdges"/>
<g shape-rendering="crispEdges">
<rect x="12.5" y="33.5" width="668" height="343" fill="none" stroke="#fff"/>
<rect x="12.5" y="378.5" width="668" height="173" fill="none" stroke="#fff"/>
<rect x="681" y="38" width="2" height="1" fill="#fff"/>
<rect x="681" y="71" width="2" height="1" fill="#fff"/>
<rect x="681" y="105" width="2" height="1" fill="#fff"/>
<rect x="681" y="138" width="2" height="1" fill="#fff"/>
<rect x="681" y="172" width="2" height="1" fill="#fff"/>
<rect x="681" y="205" width="2" height="1" fill="#fff"/>
<rect x="681" y="238" width="2" height="1" fill="#fff"/>
<rect x="681" y="272" width="2" height="1" fill="#fff"/>
<rect x="681" y="305" width="2" height="1" fill="#fff"/>
<rect x="681" y="339" width="2" height="1" fill="#fff"/>
<rect x="681" y="372" width="2" height="1" fill="#fff"/>
<rect x="681" y="395" width="2" height="1" fill="#fff"/>
<rect x="681" y="411" width="2" height="1" fill="#fff"/>
<rect x="681" y="434" width="2" height="1" fill="#fff"/>
<rect x="681" y="473" width="2" height="1" fill="#fff"/>
<rect x="681" y="512" width="2" height="1" fill="#fff"/>
<rect x="681" y="535" width="2" height="1" fill="#fff"/>
<rect x="13" y="552" width="1" height="3" fill="#fff"/>
<rect x="77" y="552" width="1" height="3" fill="#fff"/>
<rect x="141" y="552" width="1" height="3" fill="#fff"/>
<rect x="205" y="552" width="1" height="3" fill="#fff"/>
<rect x="269" y="552" width="1" height="3" fill="#fff"/>
<rect x="333" y="552" width="1" height="3" fill="#fff"/>
<rect x="397" y="552" width="1" height="3" fill="#fff"/>
<rect x="461" y="552" width="1" height="3" fill="#fff"/>
<rect x="525" y="552" width="1" height="3" fill="#fff"/>
<rect x="589" y="552" width="1" height="3" fill="#fff"/>
<rect x="653" y="552" width="1" height="3" fill="#fff"/>
<polygon points="13,546 18,551 13,551" fill="#778899"/>
<polygon points="16,40 23,40 19.5,44" fill="#fff"/>
<rect x="682" y="224" width="41" height="11" fill="#fff"/>
</g>
<text transform="translate(686.5 41.7) scale(0.88 1)" style="font-size:10.2px;fill:#fff;stroke:#fff;stroke-width:0.18px">1.54930</text>
<text transform="translate(686.5 74.7) scale(0.88 1)" style="font-size:10.2px;fill:#fff;stroke:#fff;stroke-width:0.18px">1.54820</text>
<text transform="translate(686.5 108.7) scale(0.88 1)" style="font-size:10.2px;fill:#fff;stroke:#fff;stroke-width:0.18px">1.54710</text>
<text transform="translate(686.5 141.7) scale(0.88 1)" style="font-size:10.2px;fill:#fff;stroke:#fff;stroke-width:0.18px">1.54600</text>
<text transform="translate(686.5 175.7) scale(0.88 1)" style="font-size:10.2px;fill:#fff;stroke:#fff;stroke-width:0.18px">1.54490</text>
<text transform="translate(686.5 208.7) scale(0.88 1)" style="font-size:10.2px;fill:#fff;stroke:#fff;stroke-width:0.18px">1.54380</text>
<text transform="translate(686.5 241.7) scale(0.88 1)" style="font-size:10.2px;fill:#fff;stroke:#fff;stroke-width:0.18px">1.54270</text>
<text transform="translate(686.5 275.7) scale(0.88 1)" style="font-size:10.2px;fill:#fff;stroke:#fff;stroke-width:0.18px">1.54160</text>
<text transform="translate(686.5 308.7) scale(0.88 1)" style="font-size:10.2px;fill:#fff;stroke:#fff;stroke-width:0.18px">1.54050</text>
<text transform="translate(686.5 342.7) scale(0.88 1)" style="font-size:10.2px;fill:#fff;stroke:#fff;stroke-width:0.18px">1.53940</text>
<text transform="translate(686.5 375.7) scale(0.88 1)" style="font-size:10.2px;fill:#fff;stroke:#fff;stroke-width:0.18px">1.53830</text>
<text transform="translate(686.5 232.7) scale(0.88 1)" style="font-size:10.2px;fill:#000;stroke:#000;stroke-width:0.18px">1.54301</text>
<text transform="translate(683.9 389.2) scale(0.88 1)" style="font-size:10.2px;fill:#fff;stroke:#fff;stroke-width:0.18px">120</text>
<text transform="translate(683.9 399.2) scale(0.88 1)" style="font-size:10.2px;fill:#fff;stroke:#fff;stroke-width:0.18px">100</text>
<text transform="translate(683.2 415.2) scale(0.88 1)" style="font-size:10.2px;fill:#fff;stroke:#fff;stroke-width:0.18px">80</text>
<text transform="translate(683.2 438.2) scale(0.88 1)" style="font-size:10.2px;fill:#fff;stroke:#fff;stroke-width:0.18px">50</text>
<text transform="translate(683.9 477.2) scale(0.88 1)" style="font-size:10.2px;fill:#fff;stroke:#fff;stroke-width:0.18px">0.00</text>
<text transform="translate(683.6 516.2) scale(0.88 1)" style="font-size:10.2px;fill:#fff;stroke:#fff;stroke-width:0.18px">-50</text>
<text transform="translate(683.6 539.2) scale(0.88 1)" style="font-size:10.2px;fill:#fff;stroke:#fff;stroke-width:0.18px">-80</text>
<text transform="translate(683.7 547.9000000000001) scale(0.88 1)" style="font-size:10.2px;fill:#fff;stroke:#fff;stroke-width:0.18px">-100</text>
<text transform="translate(28 45.2) scale(0.88 1)" style="font-size:10.2px;fill:#fff;stroke:#fff;stroke-width:0.18px" textLength="64.20">EURCAD,M5</text>
<text transform="translate(90 45.2) scale(0.88 1)" style="font-size:10.2px;fill:#fff;stroke:#fff;stroke-width:0.18px">1.54267</text>
<text transform="translate(126.4 45.2) scale(0.88 1)" style="font-size:10.2px;fill:#fff;stroke:#fff;stroke-width:0.18px">1.54311</text>
<text transform="translate(162.2 45.2) scale(0.88 1)" style="font-size:10.2px;fill:#fff;stroke:#fff;stroke-width:0.18px">1.54260</text>
<text transform="translate(198.4 45.2) scale(0.88 1)" style="font-size:10.2px;fill:#fff;stroke:#fff;stroke-width:0.18px">1.54301</text>
<text transform="translate(17 391.2) scale(0.88 1)" style="font-size:10.2px;fill:#fff;stroke:#fff;stroke-width:0.18px" textLength="118.18">R(9,26,52) 3.7 -54.2 67.2</text>
<text transform="translate(12 564.2) scale(0.88 1)" style="font-size:10.2px;fill:#fff;stroke:#fff;stroke-width:0.18px" textLength="56.25">4 Nov 2020</text>
<text transform="translate(76 564.2) scale(0.88 1)" style="font-size:10.2px;fill:#fff;stroke:#fff;stroke-width:0.18px" textLength="59.09">4 Nov 09:45</text>
<text transform="translate(140 564.2) scale(0.88 1)" style="font-size:10.2px;fill:#fff;stroke:#fff;stroke-width:0.18px" textLength="59.09">4 Nov 10:25</text>
<text transform="translate(204 564.2) scale(0.88 1)" style="font-size:10.2px;fill:#fff;stroke:#fff;stroke-width:0.18px" textLength="59.09">4 Nov 11:05</text>
<text transform="translate(268 564.2) scale(0.88 1)" style="font-size:10.2px;fill:#fff;stroke:#fff;stroke-width:0.18px" textLength="59.09">4 Nov 11:45</text>
<text transform="translate(332 564.2) scale(0.88 1)" style="font-size:10.2px;fill:#fff;stroke:#fff;stroke-width:0.18px" textLength="59.09">4 Nov 12:25</text>
<text transform="translate(396 564.2) scale(0.88 1)" style="font-size:10.2px;fill:#fff;stroke:#fff;stroke-width:0.18px" textLength="59.09">4 Nov 13:05</text>
<text transform="translate(460 564.2) scale(0.88 1)" style="font-size:10.2px;fill:#fff;stroke:#fff;stroke-width:0.18px" textLength="59.09">4 Nov 13:45</text>
<text transform="translate(524 564.2) scale(0.88 1)" style="font-size:10.2px;fill:#fff;stroke:#fff;stroke-width:0.18px" textLength="59.09">4 Nov 14:25</text>
<text transform="translate(588 564.2) scale(0.88 1)" style="font-size:10.2px;fill:#fff;stroke:#fff;stroke-width:0.18px" textLength="59.09">4 Nov 15:05</text>
<text transform="translate(652 564.2) scale(0.88 1)" style="font-size:10.2px;fill:#fff;stroke:#fff;stroke-width:0.18px" textLength="59.09">4 Nov 15:45</text>
</svg></body></html>
